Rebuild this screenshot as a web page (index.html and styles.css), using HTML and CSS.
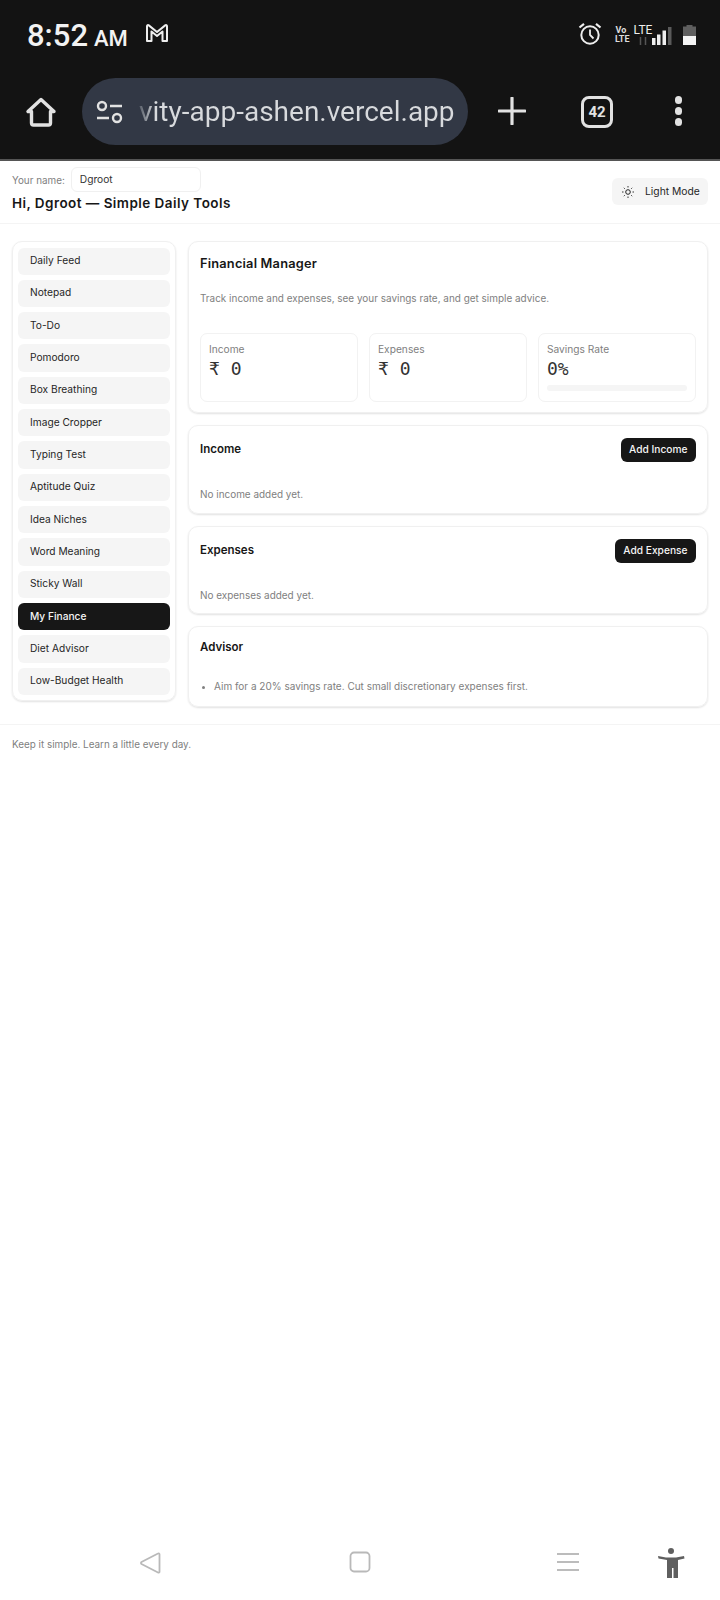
FILE: index.html
```html
<!DOCTYPE html>
<html lang="en">
<head>
<meta charset="utf-8">
<title>Simple Daily Tools</title>
<link rel="stylesheet" href="styles.css">
</head>
<body>
<div class="chrome">
  <div class="status">
    <div class="status-left">
      <span class="time">8:52</span><span class="ampm">AM</span>
      <svg class="gmail" viewBox="0 0 24 20" width="24" height="20"><path d="M2 18V3.200c0-1 1-1.400 1.800-.8L12 9l8.200-6.600c.8-.6 1.800-.2 1.800.8V18h-4.500V8.500L12 13 6.500 8.500V18z" fill="none" stroke="#eee" stroke-width="2" stroke-linejoin="round"/></svg>
    </div>
    <div class="status-right">
      <svg class="alarm" viewBox="0 0 24 24" width="24" height="24"><circle cx="12" cy="13" r="8.700" fill="none" stroke="#eee" stroke-width="2"/><path d="M12 7.500V13l3.500 3.500" fill="none" stroke="#eee" stroke-width="1.800"/><path d="M1.500 5.500 6 1.800M22.500 5.500 18 1.800" stroke="#eee" stroke-width="2.200"/></svg>
      <span class="volte">Vo<br>LTE</span>
      <span class="lte">LTE<svg class="arrows" viewBox="0 0 12 8" width="12" height="8"><path d="M3.500 0v8M8.500 0v8" stroke="#555" stroke-width="1.500"/></svg></span>
      <svg class="signal" viewBox="0 0 20 18" width="20" height="18"><rect x="0" y="11" width="3.500" height="7" fill="#eee"/><rect x="5" y="7.500" width="3.500" height="10.500" fill="#eee"/><rect x="10.500" y="3.500" width="3.500" height="14.500" fill="#eee"/><rect x="16" y="0" width="3.500" height="18" fill="#5a5a5a"/></svg>
      <svg class="battery" viewBox="0 0 13 20" width="13" height="20"><path d="M3.500 0h6v1.500H13V11H0V1.500h3.500z" fill="#5f5f5f"/><rect x="0" y="11" width="13" height="9" fill="#f4f4f4"/></svg>
    </div>
  </div>
  <div class="toolbar">
    <svg class="home" viewBox="0 0 32 32" width="32" height="32"><path d="M16 3.500 3 15.500h3.500V27a2 2 0 0 0 2 2h15a2 2 0 0 0 2-2V15.500H29z" fill="none" stroke="#e2e2e2" stroke-width="3.400" stroke-linejoin="round"/></svg>
    <div class="pill">
      <svg class="tune" viewBox="0 0 28 24" width="28" height="24"><circle cx="6" cy="6" r="4" fill="none" stroke="#e2e2e2" stroke-width="2.400"/><path d="M14 6h12M1 18h12" stroke="#e2e2e2" stroke-width="2.600"/><circle cx="21" cy="18" r="4" fill="none" stroke="#e2e2e2" stroke-width="2.400"/></svg>
      <span class="url">vity-app-ashen.vercel.app</span>
    </div>
    <svg class="plus" viewBox="0 0 28 28" width="28" height="28"><path d="M14 1v26M1 14h26" stroke="#e2e2e2" stroke-width="3.200" stroke-linecap="round"/></svg>
    <span class="tabs">42</span>
    <div class="dots"><i></i><i></i><i></i></div>
  </div>
</div>

<header class="page-header">
  <div class="header-left">
    <div class="name-row">
      <label class="name-label">Your name:</label>
      <span class="name-input">Dgroot</span>
    </div>
    <h1 class="page-title">Hi, Dgroot — Simple Daily Tools</h1>
  </div>
  <button class="mode-btn">
    <svg class="sun" viewBox="0 0 12 12" width="12" height="12"><circle cx="6" cy="6" r="2.300" fill="none" stroke="#222" stroke-width="1"/><path d="M6 0v1.500M6 10.500V12M0 6h1.500M10.500 6H12M1.800 1.800l1 1M9.200 9.200l1 1M1.800 10.200l1-1M9.200 2.800l1-1" stroke="#222" stroke-width=".9"/></svg>
    Light Mode
  </button>
</header>

<main class="layout">
  <nav class="sidebar">
    <a class="nav-item">Daily Feed</a>
    <a class="nav-item">Notepad</a>
    <a class="nav-item">To-Do</a>
    <a class="nav-item">Pomodoro</a>
    <a class="nav-item">Box Breathing</a>
    <a class="nav-item">Image Cropper</a>
    <a class="nav-item">Typing Test</a>
    <a class="nav-item">Aptitude Quiz</a>
    <a class="nav-item">Idea Niches</a>
    <a class="nav-item">Word Meaning</a>
    <a class="nav-item">Sticky Wall</a>
    <a class="nav-item active">My Finance</a>
    <a class="nav-item">Diet Advisor</a>
    <a class="nav-item">Low-Budget Health</a>
  </nav>
  <div class="content">
    <section class="card card-main">
      <h2 class="main-title">Financial Manager</h2>
      <p class="muted desc">Track income and expenses, see your savings rate, and get simple advice.</p>
      <div class="stats">
        <div class="stat"><div class="stat-label">Income</div><div class="stat-value">₹ 0</div></div>
        <div class="stat"><div class="stat-label">Expenses</div><div class="stat-value">₹ 0</div></div>
        <div class="stat"><div class="stat-label">Savings Rate</div><div class="stat-value">0%</div><div class="bar"></div></div>
      </div>
    </section>
    <section class="card card-list">
      <div class="card-head"><h3 class="card-title">Income</h3><button class="add-btn">Add Income</button></div>
      <p class="muted empty">No income added yet.</p>
    </section>
    <section class="card card-list">
      <div class="card-head"><h3 class="card-title">Expenses</h3><button class="add-btn">Add Expense</button></div>
      <p class="muted empty">No expenses added yet.</p>
    </section>
    <section class="card card-advisor">
      <h3 class="card-title">Advisor</h3>
      <ul class="tips"><li>Aim for a 20% savings rate. Cut small discretionary expenses first.</li></ul>
    </section>
  </div>
</main>

<footer class="page-footer">Keep it simple. Learn a little every day.</footer>

<div class="sysnav">
  <svg class="nav-back" viewBox="0 0 22 24" width="22" height="24"><path d="M19 2.500c.8-.5 1.500 0 1.500.8v17.400c0 .8-.7 1.300-1.500.8L2.500 13c-.7-.5-.7-1.500 0-2z" fill="none" stroke="#b9b9b9" stroke-width="1.800" stroke-linejoin="round"/></svg>
  <svg class="nav-home" viewBox="0 0 22 22" width="22" height="22"><rect x="1.500" y="1.500" width="19" height="19" rx="3.500" fill="none" stroke="#b9b9b9" stroke-width="1.800"/></svg>
  <svg class="nav-recent" viewBox="0 0 22 20" width="22" height="20"><path d="M0 2h22M0 10h22M0 18h22" stroke="#bcbcbc" stroke-width="1.800"/></svg>
  <svg class="nav-access" viewBox="0 0 28 30" width="28" height="30"><circle cx="14" cy="3" r="3" fill="#5f5f5f"/><path d="M1 8 9 9.500h10L27 8l.5 2.500-6.500 1.500V30h-4.500V20h-1.500v10H10V12l-8.500-1.500z" fill="#5f5f5f"/></svg>
</div>
</body>
</html>
```
FILE: styles.css
```css
* { box-sizing: border-box; }
html, body { margin: 0; padding: 0; }
body {
  width: 720px;
  min-height: 1600px;
  display: flex;
  flex-direction: column;
  background: #fff;
  color: #171717;
  font-family: Inter, "Liberation Sans", sans-serif;
  font-size: 10px;
}
h1, h2, h3, p, ul { margin: 0; padding: 0; }
button { font-family: inherit; border: 0; cursor: pointer; }

/* phone chrome */
.chrome {
  height: 161px;
  background: #131313;
  border-bottom: 2px solid #555;
  font-family: Roboto, sans-serif;
  color: #f2f2f2;
}
.status {
  height: 72px;
  display: flex;
  align-items: center;
  justify-content: space-between;
  padding: 0 24px 2px 27px;
}
.status-left { display: flex; align-items: baseline; }
.time { font-size: 31px; font-weight: 500; }
.ampm { font-size: 22px; font-weight: 500; margin-left: 6px; }
.gmail { margin-left: 17px; align-self: flex-start; margin-top: 6px; }
.status-right { display: flex; align-items: center; }
.alarm { margin: -2px 13px 0 0; }
.volte { font-size: 9px; line-height: 9px; font-weight: 700; text-align: center; width: 12px; margin-right: 8px; color: #ddd; }
.lte { font-size: 12px; line-height: 12px; display: flex; flex-direction: column; align-items: center; margin-top: -2px; width: 16px; color: #eee; }
.arrows { margin-top: 1px; }
.signal { margin: 2px 0 0 1px; }
.battery { margin-left: 11px; }
.toolbar {
  height: 87px;
  display: flex;
  align-items: flex-start;
  padding: 6px 0 0 25px;
}
.home { margin-top: 18px; flex: none; }
.pill {
  width: 386px;
  height: 67px;
  margin-left: 25px;
  flex: none;
  border-radius: 34px;
  background: #323845;
  display: flex;
  align-items: center;
  padding-left: 14px;
  overflow: hidden;
}
.tune { flex: none; }
.url {
  font-size: 28px;
  margin-left: 15px;
  white-space: nowrap;
  background: linear-gradient(90deg, #555b66 0, #d8dadd 16px);
  -webkit-background-clip: text;
  background-clip: text;
  -webkit-text-fill-color: transparent;
}
.plus { margin: 19px 0 0 30px; flex: none; }
.tabs {
  width: 32px;
  height: 32px;
  margin: 18px 0 0 55px;
  border: 3px solid #e2e2e2;
  border-radius: 8px;
  display: flex;
  align-items: center;
  justify-content: center;
  font-size: 15px;
  font-weight: 700;
  color: #e2e2e2;
  flex: none;
}
.dots {
  margin: 18px 0 0 61.500px;
  display: flex;
  flex-direction: column;
  gap: 3.500px;
}
.dots i { width: 7.500px; height: 7.500px; background: #e2e2e2; border-radius: 50%; display: block; }

/* page header */
.page-header {
  height: 63px;
  border-bottom: 1px solid #f4f4f4;
  display: flex;
  justify-content: space-between;
  align-items: flex-start;
  padding: 6px 12px 0;
}
.name-row { display: flex; align-items: center; gap: 6px; }
.name-label { font-size: 9.900px; color: #808080; }
.name-input {
  width: 130px;
  height: 25px;
  border: 1px solid #f0f0f0;
  border-radius: 6px;
  padding: 0 8px;
  line-height: 22px;
  font-size: 10.200px;
  color: #333;
}
.page-title { font-size: 13.500px; line-height: 17px; font-weight: 600; margin-top: 3px; letter-spacing: .45px; }
.mode-btn {
  margin-top: 11px;
  height: 27px;
  width: 96px;
  background: #f5f5f5;
  border-radius: 6px;
  font-size: 10.300px;
  color: #262626;
  display: flex;
  align-items: center;
  gap: 11px;
  padding: 0 0 2px 10px;
}
.sun { flex: none; margin-top: 2px; }

/* layout */
.layout {
  display: flex;
  align-items: flex-start;
  gap: 12px;
  padding: 17px 12px;
  border-bottom: 1px solid #f4f4f4;
}
.sidebar {
  width: 164px;
  flex: none;
  display: flex;
  flex-direction: column;
  gap: 5.080px;
  padding: 5.500px 5px 5px;
  border: 1px solid #f0f0f0;
  border-radius: 10px;
  box-shadow: 0 1px 2px rgba(0,0,0,.12);
}
.nav-item {
  height: 27.250px;
  display: flex;
  align-items: center;
  padding: 0 12px 2px;
  background: #f5f5f5;
  border-radius: 6px;
  color: #262626;
  font-size: 10.200px;
}
.nav-item.active { background: #171717; color: #f5f5f5; font-weight: 500; }

.content { flex: 1; display: flex; flex-direction: column; gap: 12px; }
.card {
  border: 1px solid #f0f0f0;
  border-radius: 10px;
  box-shadow: 0 1px 2px rgba(0,0,0,.12);
  padding: 12px 11px;
}
.card-main { height: 172px; }
.main-title { font-size: 12.800px; line-height: 20px; font-weight: 600; letter-spacing: .2px; }
.muted { color: #808080; font-size: 9.950px; }
.desc { margin-top: 16px; line-height: 16px; }
.stats { display: grid; grid-template-columns: repeat(3, 1fr); gap: 11px; margin-top: 27px; }
.stat {
  height: 69px;
  border: 1px solid #f2f2f2;
  border-radius: 7px;
  padding: 8px 8px;
}
.stat-label { font-size: 10.200px; line-height: 14px; color: #808080; }
.stat-value { font-family: "DejaVu Sans Mono", monospace; font-size: 18px; line-height: 22px; margin-top: 2px; color: #333; }
.bar { height: 6px; background: #f5f5f5; border-radius: 3px; margin-top: 5px; }
.card-list { height: 88.500px; padding-top: 12px; }
.card-head { display: flex; justify-content: space-between; align-items: flex-start; }
.card-title { font-size: 11.500px; line-height: 22px; font-weight: 600; }
.add-btn {
  height: 24px;
  padding: 0 8.500px 2px;
  background: #171717;
  color: #f5f5f5;
  border-radius: 6px;
  font-size: 10.200px;
  font-weight: 500;
}
.empty { margin-top: 24px; line-height: 16px; }
.card-advisor { height: 81px; padding-top: 9px; }
.tips { list-style: disc; padding-left: 14px; margin-top: 20px; color: #808080; font-size: 10px; line-height: 16px; }
.tips li::marker { font-size: 8px; }

.page-footer { padding: 11px 12px; font-size: 9.900px; line-height: 16px; color: #808080; }

/* system nav */
.sysnav {
  margin-top: auto;
  height: 70px;
  position: relative;
  display: flex;
  align-items: flex-start;
  padding: 20px 0 0 139px;
}
.nav-back { margin-top: 1px; }
.nav-home { margin: 1px 0 0 188px; }
.nav-recent { margin: 2px 0 0 186px; }
.nav-access { margin: -2px 0 0 78px; }
```
